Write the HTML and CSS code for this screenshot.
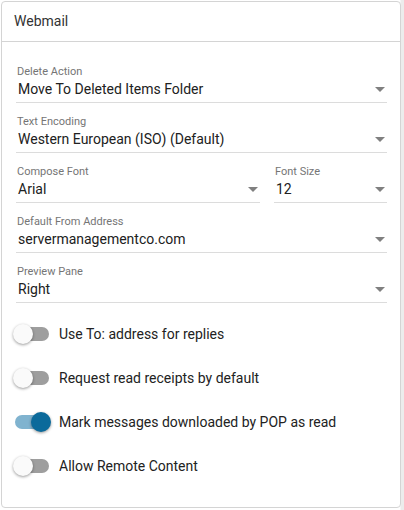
FILE: index.html
```html
<!DOCTYPE html>
<html lang="en">
<head>
    <meta charset="UTF-8">
    <meta name="viewport" content="width=device-width, initial-scale=1.0">
    <title>Webmail Settings</title>
    <link rel="stylesheet" href="styles.css">
</head>
<body>

    <div class="card">
        <div class="card-header">Webmail</div>

        <div class="card-body">
            <div class="field">
                <label>Delete Action</label>
                <div class="select">Move To Deleted Items Folder</div>
            </div>

            <div class="field">
                <label>Text Encoding</label>
                <div class="select">Western European (ISO) (Default)</div>
            </div>

            <div class="field-row">
                <div class="field grow">
                    <label>Compose Font</label>
                    <div class="select">Arial</div>
                </div>
                <div class="field small">
                    <label>Font Size</label>
                    <div class="select">12</div>
                </div>
            </div>

            <div class="field">
                <label>Default From Address</label>
                <div class="select">servermanagementco.com</div>
            </div>

            <div class="field">
                <label>Preview Pane</label>
                <div class="select">Right</div>
            </div>

            <!-- Toggles -->
            <div class="toggles">
                <div class="toggle">
                    <span class="switch"><span class="thumb"></span></span>
                    <span>Use To: address for replies</span>
                </div>
                <div class="toggle">
                    <span class="switch"><span class="thumb"></span></span>
                    <span>Request read receipts by default</span>
                </div>
                <div class="toggle">
                    <span class="switch on"><span class="thumb"></span></span>
                    <span>Mark messages downloaded by POP as read</span>
                </div>
                <div class="toggle">
                    <span class="switch"><span class="thumb"></span></span>
                    <span>Allow Remote Content</span>
                </div>
            </div>
        </div>
    </div>

</body>
</html>
```

FILE: styles.css
```css
* {
    margin: 0;
    padding: 0;
    box-sizing: border-box;
}

body {
    font-family: Roboto, "Liberation Sans", sans-serif;
    color: #212121;
    padding: 1px 3px 0 1px;
    background: linear-gradient(to right, #fff 400px, #ececec 401px);
    min-height: 510px;
}

.card {
    background-color: #fff;
    border: 1px solid #d4d4d4;
    border-radius: 4px;
    height: 507px;
}

.card-header {
    height: 40px;
    border-bottom: 1px solid #d4d4d4;
    padding: 11px 0 0 12px;
    font-size: 14px;
    line-height: 16px;
    color: #333;
}

.card-body {
    padding: 23px 13px 0 14px;
}

.field {
    margin-bottom: 12px;
}

.field label {
    display: block;
    font-size: 11px;
    line-height: 14px;
    color: #757575;
    padding-left: 1px;
}

.select {
    position: relative;
    font-size: 14px;
    line-height: 20px;
    padding: 0 0 3px 2px;
    border-bottom: 1px solid #dcdcdc;
}

.select::after {
    content: "";
    position: absolute;
    right: 2px;
    top: 8px;
    border-left: 5px solid transparent;
    border-right: 5px solid transparent;
    border-top: 5px solid #808080;
}

.field-row {
    display: flex;
    gap: 14px;
}

.field-row .grow {
    flex: 1;
}

.field-row .small {
    width: 113px;
}

.toggles {
    margin-top: -3px;
}

.toggle {
    display: flex;
    align-items: center;
    height: 44px;
    font-size: 14px;
    color: #222;
}

.switch {
    position: relative;
    width: 34px;
    height: 14px;
    margin: 0 10px 0 -1px;
    border-radius: 7px;
    background-color: #9e9e9e;
}

.thumb {
    position: absolute;
    left: -2px;
    top: -3px;
    width: 20px;
    height: 20px;
    border-radius: 50%;
    background-color: #fafafa;
    box-shadow: 0 1px 3px rgba(0, 0, 0, 0.4);
}

.switch.on {
    background-color: #80b3cf;
}

.switch.on .thumb {
    left: auto;
    right: -2px;
    background-color: #0b6a9b;
}
```
